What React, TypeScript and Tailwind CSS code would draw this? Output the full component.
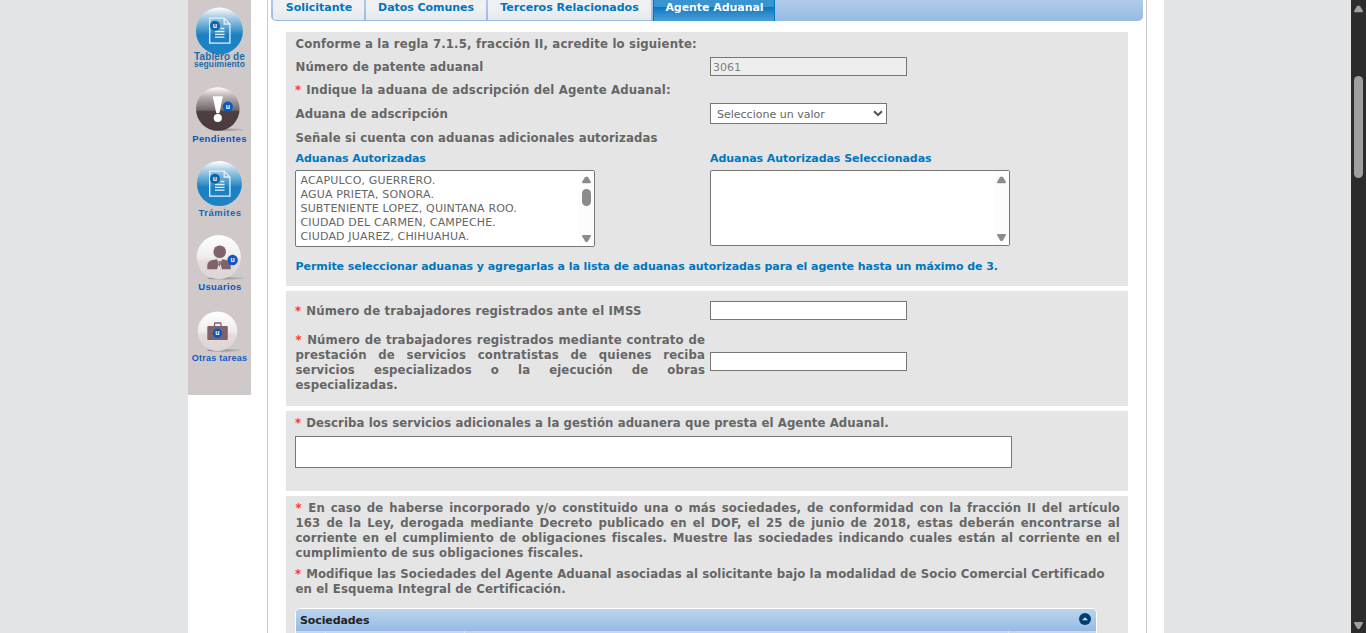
import React from "react";

const TAB_TEXT = "font-['DejaVu_Sans',sans-serif] text-[11px] font-bold";
const BOLD = "font-['DejaVu_Sans_Condensed','DejaVu_Sans',sans-serif] text-[13px] font-bold text-[#666] leading-[15px]";
const JUSTIFY = "block whitespace-nowrap text-justify [text-align-last:justify]";

function Req() {
  return <span className="inline-block w-[7px] font-bold text-[#ff3a20] [text-align-last:left]">*</span>;
}

function Arrow({ down, color = "#8b8b8b" }: { down?: boolean; color?: string }) {
  return (
    <svg width="9" height="8" viewBox="0 0 9 8" className="block" fill={color}>
      <path
        d={down ? "M0 1.1Q0 0 1 0H8Q9 0 9 1.1L6 6.2Q4.5 8 3 6.2Z" : "M0 6Q0 7.200 1 7.200H8Q9 7.200 9 6L6 1.200Q4.5 -.4 3 1.200Z"}
      />
    </svg>
  );
}

function Badge({ x, y, r, c = "#0a58c4" }: { x: number; y: number; r: number; c?: string }) {
  return (
    <g>
      <circle cx={x} cy={y} r={r} fill={c} />
      <text x={x} y={y + 2} textAnchor="middle" fontSize="7" fontWeight="700" fill="#fff" fontFamily="Liberation Sans, sans-serif">
        u
      </text>
    </g>
  );
}

function Defs() {
  return (
    <defs>
      <linearGradient id="blue" x1="0" y1="0" x2="0" y2="1">
        <stop offset="0" stopColor="#fff" />
        <stop offset=".2" stopColor="#a9cfe6" />
        <stop offset=".5" stopColor="#3c93cb" />
        <stop offset=".58" stopColor="#1b80c0" />
        <stop offset="1" stopColor="#1e84c6" />
      </linearGradient>
      <linearGradient id="brown" x1="0" y1="0" x2="0" y2="1">
        <stop offset="0" stopColor="#fff" />
        <stop offset=".22" stopColor="#b7afb0" />
        <stop offset=".52" stopColor="#74686a" />
        <stop offset=".56" stopColor="#4d3f40" />
        <stop offset="1" stopColor="#4a3a3b" />
      </linearGradient>
      <linearGradient id="pale" x1="0" y1="0" x2="0" y2="1">
        <stop offset="0" stopColor="#fff" />
        <stop offset=".5" stopColor="#efecec" />
        <stop offset=".6" stopColor="#e2dcdc" />
        <stop offset="1" stopColor="#ddd5d5" />
      </linearGradient>
      <linearGradient id="shade" x1="0" y1="0" x2="1" y2="0">
        <stop offset="0" stopColor="#8f8888" />
        <stop offset=".6" stopColor="#a8a1a1" />
        <stop offset="1" stopColor="#c5bebe" />
      </linearGradient>
    </defs>
  );
}

function DocIcon({ cy, r }: { cy: number; r: number }) {
  return (
    <svg width="63" height="50" viewBox="0 0 63 50" className="block">
      <Defs />
      <circle cx="31.4" cy={cy} r={r} fill="url(#blue)" />
      <g fill="none" stroke="#e3f0f9" strokeWidth="1.3">
        <path d="M21.7 11.2H36.2L41.9 17V36.2H21.7Z" />
        <path d="M36.2 11.2V17H41.9" />
        <path d="M32.500 21.500h3.800M27 24.500h9.500M27 27.300h9.500M27 30.100h9.500" />
      </g>
      <Badge x={27} y={18.7} r={5} c="#0869a9" />
    </svg>
  );
}

function Label({ children, cls }: { children: React.ReactNode; cls: string }) {
  return (
    <div className={`whitespace-nowrap text-center font-['Liberation_Sans',sans-serif] font-bold ${cls}`}>{children}</div>
  );
}

function Sidebar() {
  return (
    <aside className="h-[395px] w-[63px] shrink-0 bg-[#d0c9c9] pt-[7px]">
      <div className="h-[78px]">
        <DocIcon cy={24} r={23.5} />
        <div className="-mt-[5px]">
          <Label cls="relative text-[10px] leading-[9px] tracking-[0.1px] text-[#1a6cab]">Tablero de</Label>
          <Label cls="relative -mt-[1px] text-[8.5px] leading-[8px] tracking-[0.1px] text-[#1a6cab]">seguimiento</Label>
        </div>
      </div>
      <div className="h-[75px]">
        <svg width="63" height="48" viewBox="0 0 63 48" className="block">
          <ellipse cx="40" cy="44.7" rx="16" ry="1.2" fill="url(#shade)" />
          <circle cx="29.8" cy="24" r="21.8" fill="url(#brown)" />
          <path d="M24.700 11.300H34.900L31.400 28.300H28.300Z" fill="#fff" />
          <circle cx="29.800" cy="33" r="4.100" fill="#fff" />
          <Badge x={39.8} y={21.6} r={5} c="#0d55c0" />
        </svg>
        <Label cls="text-[9.5px] leading-[11px] tracking-[0.4px] text-[#0b54c4]">Pendientes</Label>
      </div>
      <div className="h-[74px]">
        <DocIcon cy={23.6} r={22.5} />
        <Label cls="-mt-[3px] pl-[1px] text-[9.5px] leading-[11px] tracking-[0.5px] text-[#1068b8]">Trámites</Label>
      </div>
      <div className="h-[74px]">
        <svg width="63" height="47" viewBox="0 0 63 47" className="block">
          <ellipse cx="38" cy="44.300" rx="19" ry="1.300" fill="url(#shade)" />
          <circle cx="30.8" cy="23.2" r="22.1" fill="url(#pale)" />
          <circle cx="31.700" cy="17.800" r="6.300" fill="#80626a" />
          <path d="M19.300 35.200V31Q20 26.500 25 26L29 25.300 31.500 33 34 25.300 38 26Q42 27.500 42.800 31V35.200H34L32.300 29 33 27H30.200L31 29 29 35.200Z" fill="#80626a" />
          <Badge x={44.6} y={26} r={5.2} c="#0d55c0" />
        </svg>
        <Label cls="pl-[1px] text-[9.5px] leading-[11px] tracking-[0.35px] text-[#0b54c4]">Usuarios</Label>
      </div>
      <div>
        <svg width="63" height="44" viewBox="0 0 63 44" className="block">
          <ellipse cx="36" cy="42.300" rx="17" ry="1.400" fill="url(#shade)" />
          <circle cx="29.500" cy="23.200" r="19.800" fill="url(#pale)" />
          <path d="M26.500 18V15.800Q26.500 15 27.500 15H32Q33 15 33 15.800V18" fill="none" stroke="#80626a" strokeWidth="1.300" />
          <rect x="19.300" y="18" width="20.500" height="14" rx="1" fill="#80626a" />
          <Badge x={29.5} y={25.2} r={4.7} c="#0d55c0" />
        </svg>
        <Label cls="mt-[1px] text-[9px] leading-[11px] tracking-[0.25px] text-[#1059c4]">Otras tareas</Label>
      </div>
    </aside>
  );
}

function Tab({ label, cls }: { label: string; cls: string }) {
  return (
    <div className={`flex h-[20px] shrink-0 justify-center bg-linear-to-b from-[#eef0f2] from-40% to-[#e6e8ea] text-[#0076be] ${cls}`}>
      <span className="leading-[15px]">{label}</span>
    </div>
  );
}

function Tabs() {
  return (
    <nav className={`ml-[3px] flex h-[21px] w-[872px] whitespace-nowrap rounded-b-[5px] bg-linear-to-b from-[#b0cbea] to-[#97bae4] pl-[2px] ${TAB_TEXT}`}>
      <Tab label="Solicitante" cls="w-[91px] rounded-bl-[3px] pl-[1px]" />
      <Tab label="Datos Comunes" cls="ml-[2px] w-[120px] tracking-[-0.05px]" />
      <Tab label="Terceros Relacionados" cls="ml-[2px] w-[163px]" />
      <div className="ml-[2px] flex h-[21px] w-[122px] justify-center border-x border-[#0076be] bg-linear-to-b from-[#3a94d0] from-33% via-[#0078c4] via-34% to-[#4a9fd8] pl-[1px] text-white tracking-[-0.05px]">
        <span className="leading-[15px]">Agente Aduanal</span>
      </div>
    </nav>
  );
}

function ListBox({ items, thumb, cls }: { items: string[]; thumb?: boolean; cls: string }) {
  return (
    <div className={`flex w-[300px] rounded-[2px] border border-[#767676] bg-white ${cls}`}>
      <div className="flex-1 whitespace-nowrap pl-[4.5px] pt-[3px] font-['DejaVu_Sans',sans-serif] text-[11px] leading-[14px] tracking-[0.16px] text-[#666]">
        {items.map((i) => (
          <div key={i}>{i}</div>
        ))}
      </div>
      <div className="flex w-[15px] flex-col items-center bg-[#fcfcfc] pb-[3px] pt-[5px]">
        <Arrow />
        {thumb && <div className="mt-[5px] h-[17px] w-[9px] rounded-full bg-[#8b8b8b]" />}
        <div className="flex-1" />
        <Arrow down />
      </div>
    </div>
  );
}

function Field() {
  return <div className="h-[19px] w-[197px] border border-[#767676] bg-white" />;
}

export default function App() {
  return (
    <div className="flex h-[633px] w-[1366px] overflow-hidden bg-[#e3e4e6]">
      <div className="w-[188px] shrink-0" />
      <div className="flex w-[976px] shrink-0 bg-white">
        <Sidebar />
        <main className="ml-[16px] w-[880px] shrink-0 border-x border-[#cdc8c9]">
          <Tabs />
          <div className="ml-[18px] mt-[11px] flex w-[842px] flex-col gap-[5px]">
            <section className="h-[254px] bg-[#e5e5e5] pl-[9px]">
              <div className={`flex h-[23px] items-center pl-[0.5px] tracking-[0.17px] ${BOLD}`}>Conforme a la regla 7.1.5, fracción II, acredite lo siguiente:</div>
              <div className={`flex h-[23px] items-center ${BOLD}`}>
                <span className="w-[415px] pl-[0.5px] tracking-[0.12px]">Número de patente aduanal</span>
                <div className="h-[19px] w-[197px] border border-[#767676] bg-[#eee] pl-[2px] font-['DejaVu_Sans',sans-serif] text-[11px] font-normal leading-[19px] text-[#808080]">3061</div>
              </div>
              <div className={`flex h-[23px] items-center ${BOLD}`}>
                <p className="tracking-[0.15px]"><Req /> Indique la aduana de adscripción del Agente Aduanal:</p>
              </div>
              <div className={`flex h-[25px] items-center ${BOLD}`}>
                <span className="w-[415px] pl-[0.5px] tracking-[0.12px]">Aduana de adscripción</span>
                <div className="flex h-[21px] w-[177px] items-center justify-between border border-[#767676] bg-white pl-[6px] pr-[3px]">
                  <span className="pt-px font-['DejaVu_Sans',sans-serif] text-[11px] font-normal">Seleccione un valor</span>
                  <svg width="10" height="7" viewBox="0 0 10 7" fill="none" stroke="#555" strokeWidth="2">
                    <path d="M1 1.200L5 5L9 1.200" />
                  </svg>
                </div>
              </div>
              <div className={`flex h-[23px] items-center pl-[0.5px] tracking-[0.12px] ${BOLD}`}>Señale si cuenta con aduanas adicionales autorizadas</div>
              <div className={`flex h-[21px] pt-[2px] leading-[15px] tracking-[-0.05px] text-[#0076be] ${TAB_TEXT}`}>
                <span className="w-[415px] pl-[0.5px]">Aduanas Autorizadas</span>
                <span>Aduanas Autorizadas Seleccionadas</span>
              </div>
              <div className="flex items-start gap-[115px]">
                <ListBox
                  thumb
                  cls="h-[77px]"
                  items={["ACAPULCO, GUERRERO.", "AGUA PRIETA, SONORA.", "SUBTENIENTE LOPEZ, QUINTANA ROO.", "CIUDAD DEL CARMEN, CAMPECHE.", "CIUDAD JUAREZ, CHIHUAHUA."]}
                />
                <ListBox cls="h-[76px]" items={[]} />
              </div>
              <p className={`mt-[12px] whitespace-nowrap pl-[0.5px] leading-[15px] tracking-[-0.06px] text-[#0076be] ${TAB_TEXT}`}>
                Permite seleccionar aduanas y agregarlas a la lista de aduanas autorizadas para el agente hasta un máximo de 3.
              </p>
            </section>

            <section className="h-[115px] bg-[#e5e5e5] pl-[9px] pt-[10px]">
              <div className={`flex h-[19px] items-center ${BOLD}`}>
                <p className="w-[415px] tracking-[0.18px]"><Req /> Número de trabajadores registrados ante el IMSS</p>
                <Field />
              </div>
              <div className={`mt-[11px] flex h-[60px] items-center gap-[5px] ${BOLD}`}>
                <p className="w-[410px] pl-[0.5px] pt-[2px] tracking-[0.13px]">
                  <span className={JUSTIFY}><Req /> Número de trabajadores registrados mediante contrato de</span>
                  <span className={JUSTIFY}>prestación de servicios contratistas de quienes reciba</span>
                  <span className={JUSTIFY}>servicios especializados o la ejecución de obras</span>
                  <span className="block">especializadas.</span>
                </p>
                <Field />
              </div>
            </section>

            <section className="h-[80px] bg-[#e5e5e5] pl-[9px] pt-[4px]">
              <p className={`tracking-[0.1px] ${BOLD}`}><Req /> Describa los servicios adicionales a la gestión aduanera que presta el Agente Aduanal.</p>
              <div className="mt-[6px] h-[32px] w-[717px] border border-[#767676] bg-white" />
            </section>

            <section className="h-[180px] bg-[#e5e5e5] pl-[9px] pt-[4px]">
              <p className={`w-[825px] pl-[0.5px] tracking-[0.14px] ${BOLD}`}>
                <span className={JUSTIFY}><Req /> En caso de haberse incorporado y/o constituido una o más sociedades, de conformidad con la fracción II del artículo</span>
                <span className={JUSTIFY}>163 de la Ley, derogada mediante Decreto publicado en el DOF, el 25 de junio de 2018, estas deberán encontrarse al</span>
                <span className={JUSTIFY}>corriente en el cumplimiento de obligaciones fiscales. Muestre las sociedades indicando cuales están al corriente en el</span>
                <span className="block">cumplimiento de sus obligaciones fiscales.</span>
              </p>
              <p className={`mt-[6px] w-[825px] whitespace-nowrap ${BOLD}`}>
                <span className="block tracking-[0.1px]"><Req /> Modifique las Sociedades del Agente Aduanal asociadas al solicitante bajo la modalidad de Socio Comercial Certificado</span>
                <span className="block pl-[0.5px] tracking-[0.15px]">en el Esquema Integral de Certificación.</span>
              </p>
              <div className="mt-[12px] w-[802px] overflow-hidden rounded-t-[5px] border border-white">
                <div className={`flex h-[22px] items-center justify-between bg-linear-to-b from-[#bcd4ee] to-[#97bae4] pl-[4px] pr-[5px] tracking-[-0.1px] text-[#222] ${TAB_TEXT}`}>
                  <span className="pt-[2px]">Sociedades</span>
                  <svg width="12" height="12" viewBox="0 0 12 12" className="-mt-[2px]">
                    <circle cx="6" cy="6" r="6" fill="#00406f" />
                    <path d="M3 7.200L6 4.200L9 7.200Z" fill="#c8dcf0" />
                  </svg>
                </div>
                <div className="flex h-[20px] gap-px bg-[#e2ecf8]">
                  <div className="w-[29px] bg-[#c3d8ef]" />
                  <div className="w-[138px] bg-[#c3d8ef]" />
                  <div className="w-[543px] bg-[#c3d8ef]" />
                  <div className="flex-1 bg-[#c3d8ef]" />
                </div>
              </div>
            </section>
          </div>
        </main>
      </div>
      <div className="flex-1" />
      <div className="flex w-[15px] shrink-0 flex-col items-center bg-[#2c2c2c] pb-[3px] pt-[5px]">
        <Arrow color="#9f9f9f" />
        <div className="mt-[63px] h-[102px] w-[9px] rounded-full bg-[#9f9f9f]" />
        <div className="flex-1" />
        <Arrow down color="#9f9f9f" />
      </div>
    </div>
  );
}
